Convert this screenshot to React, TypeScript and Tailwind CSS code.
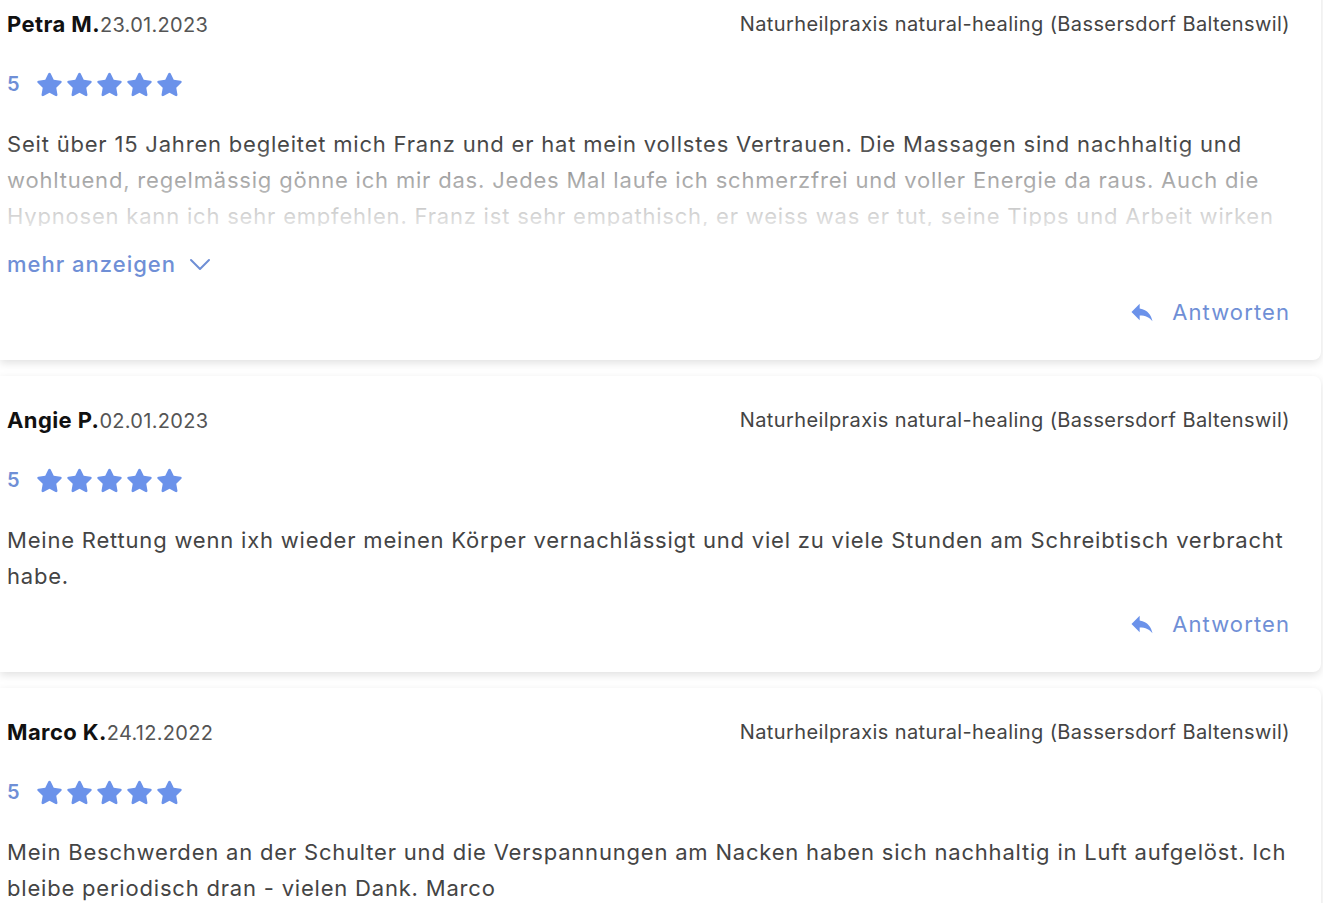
import React from "react";
import { MdReply } from "react-icons/md";

const FONT = { fontFamily: "Inter, 'Noto Sans', sans-serif" };

function Star() {
  return (
    <svg width="29" height="29" viewBox="0 0 24 24" className="block">
      <path
        d="M12 2.2c.4 0 .8.2 1 .6l2.5 5.2 5.7.8c.9.1 1.2 1.2.6 1.8l-4.2 4.1 1 5.7c.1.9-.8 1.5-1.6 1.1L12 18.8l-5 2.7c-.8.4-1.7-.2-1.6-1.1l1-5.7-4.2-4.1c-.6-.6-.3-1.7.6-1.8l5.7-.8L11 2.8c.2-.4.6-.6 1-.6z"
        fill="#6b92ea"
      />
    </svg>
  );
}

function Rating() {
  return (
    <div className="flex h-[28px] items-center">
      <span className="w-[28px] text-[20px] font-semibold text-[#6f8fd6]">5</span>
      <div className="flex gap-[1px]">
        <Star />
        <Star />
        <Star />
        <Star />
        <Star />
      </div>
    </div>
  );
}

function Header({ name, date }: { name: string; date: string }) {
  return (
    <div className="flex h-[28px] items-center justify-between">
      <div className="flex items-baseline">
        <span className="text-[22px] font-bold tracking-[0.4px] text-[#111]">{name}</span>
        <span className="text-[20px] tracking-[0.3px] text-[#555]">{date}</span>
      </div>
      <span className="text-[20px] tracking-[0.4px] text-[#444]">
        Naturheilpraxis natural-healing (Bassersdorf Baltenswil)
      </span>
    </div>
  );
}

function Reply() {
  return (
    <div className="flex h-[28px] items-center justify-end gap-[16px] text-[#6f8fd6]">
      <MdReply size={28} color="#6b92ea" />
      <span className="text-[22px] tracking-[1.1px]">Antworten</span>
    </div>
  );
}

function Card({
  name,
  date,
  lines,
  collapsed,
  first,
}: {
  name: string;
  date: string;
  lines: string[];
  collapsed?: boolean;
  first?: boolean;
}) {
  return (
    <div
      className={
        "w-[1321px] rounded-r-lg bg-white pb-[34px] pl-[7px] pr-[31px] pt-[30px] shadow-[0_3px_8px_rgba(0,0,0,0.12)] " +
        (first ? "-mt-[20px]" : "")
      }
    >
      <Header name={name} date={date} />
      <div className="mt-[32px]">
        <Rating />
      </div>
      {collapsed ? (
        <>
          <div className="relative mt-[28px] h-[100px] overflow-hidden">
            <p className="whitespace-nowrap text-[22px] leading-[36px] tracking-[0.8px] text-[#444]">
              {lines.map((l, i) => (
                <React.Fragment key={i}>
                  {l}
                  <br />
                </React.Fragment>
              ))}
            </p>
            <div className="absolute inset-0 bg-[linear-gradient(to_bottom,rgba(255,255,255,0)_18%,rgba(255,255,255,0.5)_50%,rgba(255,255,255,0.85)_100%)]" />
          </div>
          <div className="mt-[24px] flex h-[28px] items-center gap-[12px] text-[#6f8fd6]">
            <span className="text-[22px] font-medium tracking-[1px]">mehr anzeigen</span>
            <svg width="24" height="24" viewBox="0 0 24 24" fill="none" stroke="#6f8fd6" strokeWidth="2" strokeLinecap="round" strokeLinejoin="round">
              <path d="M3 8l9 9 9-9" />
            </svg>
          </div>
          <div className="mt-[20px]">
            <Reply />
          </div>
        </>
      ) : (
        <>
          <p className="mt-[28px] whitespace-nowrap text-[22px] leading-[36px] tracking-[0.8px] text-[#444]">
            {lines.map((l, i) => (
              <React.Fragment key={i}>
                {l}
                {i < lines.length - 1 && <br />}
              </React.Fragment>
            ))}
          </p>
          <div className="mt-[16px]">
            <Reply />
          </div>
        </>
      )}
    </div>
  );
}

export default function App() {
  return (
    <div className="h-[903px] w-[1323px] overflow-hidden bg-white" style={FONT}>
      <div className="flex flex-col gap-[16px]">
        <Card
          first
          collapsed
          name="Petra M."
          date="23.01.2023"
          lines={[
            "Seit über 15 Jahren begleitet mich Franz und er hat mein vollstes Vertrauen. Die Massagen sind nachhaltig und",
            "wohltuend, regelmässig gönne ich mir das. Jedes Mal laufe ich schmerzfrei und voller Energie da raus. Auch die",
            "Hypnosen kann ich sehr empfehlen. Franz ist sehr empathisch, er weiss was er tut, seine Tipps und Arbeit wirken",
            "nachhaltig.",
          ]}
        />
        <Card
          name="Angie P."
          date="02.01.2023"
          lines={[
            "Meine Rettung wenn ixh wieder meinen Körper vernachlässigt und viel zu viele Stunden am Schreibtisch verbracht",
            "habe.",
          ]}
        />
        <Card
          name="Marco K."
          date="24.12.2022"
          lines={[
            "Mein Beschwerden an der Schulter und die Verspannungen am Nacken haben sich nachhaltig in Luft aufgelöst. Ich",
            "bleibe periodisch dran - vielen Dank. Marco",
          ]}
        />
      </div>
    </div>
  );
}
